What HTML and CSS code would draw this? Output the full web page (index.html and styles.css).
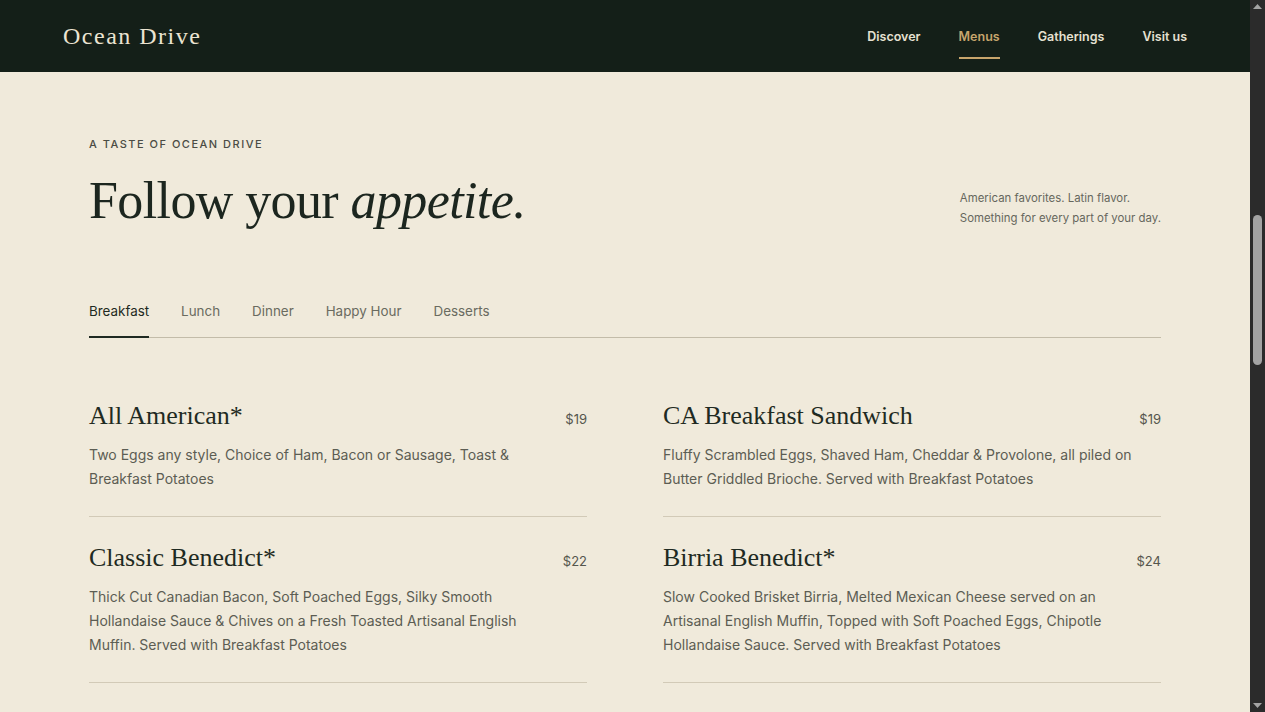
FILE: index.html
```html
<!DOCTYPE html>
<html lang="en">
<head>
  <meta charset="UTF-8" />
  <title>Menus - Ocean Drive</title>
  <link rel="stylesheet" href="styles.css">
</head>
<body>
  <header class="topbar">
    <a class="logo" href="#">Ocean Drive</a>
    <nav class="nav">
      <a href="#">Discover</a>
      <a href="#" class="active">Menus</a>
      <a href="#">Gatherings</a>
      <a href="#">Visit us</a>
    </nav>
  </header>

  <main class="page">
    <p class="eyebrow">A TASTE OF OCEAN DRIVE</p>
    <div class="intro">
      <h1>Follow your <em>appetite.</em></h1>
      <p class="intro-note">American favorites. Latin flavor.<br>Something for every part of your day.</p>
    </div>

    <div class="tabs">
      <a href="#" class="tab active">Breakfast</a>
      <a href="#" class="tab">Lunch</a>
      <a href="#" class="tab">Dinner</a>
      <a href="#" class="tab">Happy Hour</a>
      <a href="#" class="tab">Desserts</a>
    </div>

    <div class="menu-grid">
      <div class="dish">
        <div class="dish-head">
          <h3>All American*</h3>
          <span class="price">$19</span>
        </div>
        <p>Two Eggs any style, Choice of Ham, Bacon or Sausage, Toast &amp; Breakfast Potatoes</p>
      </div>
      <div class="dish">
        <div class="dish-head">
          <h3>CA Breakfast Sandwich</h3>
          <span class="price">$19</span>
        </div>
        <p>Fluffy Scrambled Eggs, Shaved Ham, Cheddar &amp; Provolone, all piled on Butter Griddled Brioche. Served with Breakfast Potatoes</p>
      </div>
      <div class="dish">
        <div class="dish-head">
          <h3>Classic Benedict*</h3>
          <span class="price">$22</span>
        </div>
        <p>Thick Cut Canadian Bacon, Soft Poached Eggs, Silky Smooth Hollandaise Sauce &amp; Chives on a Fresh Toasted Artisanal English Muffin. Served with Breakfast Potatoes</p>
      </div>
      <div class="dish">
        <div class="dish-head">
          <h3>Birria Benedict*</h3>
          <span class="price">$24</span>
        </div>
        <p>Slow Cooked Brisket Birria, Melted Mexican Cheese served on an Artisanal English Muffin, Topped with Soft Poached Eggs, Chipotle Hollandaise Sauce. Served with Breakfast Potatoes</p>
      </div>
      <div class="dish">
        <div class="dish-head">
          <h3>Buttermilk Pancakes</h3>
          <span class="price">$17</span>
        </div>
        <p>Three Fluffy Buttermilk Pancakes with Whipped Butter, Warm Maple Syrup &amp; Seasonal Berries</p>
      </div>
      <div class="dish">
        <div class="dish-head">
          <h3>Breakfast Burrito</h3>
          <span class="price">$18</span>
        </div>
        <p>Scrambled Eggs, Chorizo, Breakfast Potatoes, Pepper Jack &amp; Pico de Gallo in a Flour Tortilla with Salsa Roja</p>
      </div>
      <div class="dish">
        <div class="dish-head">
          <h3>Chilaquiles</h3>
          <span class="price">$19</span>
        </div>
        <p>Crispy Tortilla Chips tossed in Salsa Verde, Two Fried Eggs, Queso Fresco, Crema &amp; Pickled Onions</p>
      </div>
      <div class="dish">
        <div class="dish-head">
          <h3>Avocado Toast</h3>
          <span class="price">$16</span>
        </div>
        <p>Smashed Avocado on Toasted Sourdough, Cherry Tomatoes, Cotija, Chili Flakes &amp; a Poached Egg</p>
      </div>
    </div>

    <p class="footnote">*Consuming raw or undercooked meats, poultry, seafood, shellfish or eggs may increase your risk of foodborne illness.</p>
  </main>

  <footer class="footer">
    <span class="logo">Ocean Drive</span>
    <span>Open daily &middot; 7am &ndash; 10pm</span>
  </footer>

  <!-- window scrollbar as it shows in the shot -->
  <div class="scrollbar">
    <svg class="arrow" width="15" height="12" viewBox="0 0 15 12"><path d="M3 9 L7.5 4 L12 9 Z" fill="#a3a3a3"/></svg>
    <div class="thumb"></div>
    <svg class="arrow down" width="15" height="12" viewBox="0 0 15 12"><path d="M3 3 L7.5 8 L12 3 Z" fill="#a3a3a3"/></svg>
  </div>
</body>
</html>
```

FILE: styles.css
```css
* {
  box-sizing: border-box;
  margin: 0;
  padding: 0;
}

body {
  padding-right: 15px;
  background-color: #f0eadb;
  color: #1f2a22;
  font-family: Inter, "Noto Sans", sans-serif;
}

a {
  text-decoration: none;
  color: inherit;
}

/* header */
.topbar {
  position: sticky;
  top: 0;
  z-index: 10;
  height: 72px;
  padding: 0 63px;
  display: flex;
  align-items: center;
  justify-content: space-between;
  background-color: #141f18;
}

.logo {
  font-family: "Liberation Serif", serif;
  font-size: 24px;
  letter-spacing: 1.5px;
  color: #ebe4d2;
}

.nav {
  display: flex;
  gap: 38px;
  height: 100%;
}

.nav a {
  display: flex;
  align-items: center;
  position: relative;
  font-size: 12.5px;
  font-weight: 600;
  color: #e6e1d2;
}

.nav a.active {
  color: #c7a56c;
}

.nav a.active::after {
  content: "";
  position: absolute;
  left: 0;
  right: 0;
  top: 57px;
  height: 2px;
  background-color: #c7a56c;
}

/* intro */
.page {
  max-width: 1072px;
  margin: 0 auto;
  padding-top: 64px;
}

.eyebrow {
  font-size: 11px;
  line-height: 16px;
  letter-spacing: 1.5px;
  font-weight: 500;
  color: #4b4c44;
}

.intro {
  display: flex;
  justify-content: space-between;
  align-items: flex-end;
  margin-top: 23px;
}

.intro h1 {
  font-family: "Liberation Serif", serif;
  font-weight: normal;
  font-size: 52px;
  line-height: 52px;
  letter-spacing: -0.6px;
  color: #1c261f;
}

.intro-note {
  font-size: 11.4px;
  line-height: 20px;
  color: #66675d;
  margin-bottom: -1px;
}

/* tabs */
.tabs {
  display: flex;
  gap: 32px;
  margin-top: 74px;
  border-bottom: 1px solid #c3bca9;
}

.tab {
  font-size: 13.4px;
  line-height: 20px;
  padding-bottom: 15px;
  margin-bottom: -1px;
  color: #6a6b60;
  border-bottom: 2px solid transparent;
}

.tab.active {
  color: #1f2a22;
  border-bottom-color: #1f2a22;
}

/* dishes */
.menu-grid {
  display: grid;
  grid-template-columns: 1fr 1fr;
  column-gap: 76px;
  margin-top: 37px;
}

.dish {
  padding: 25px 0 25px;
  border-bottom: 1px solid #d2cab7;
}

.dish-head {
  display: flex;
  justify-content: space-between;
  align-items: baseline;
}

.dish h3 {
  font-family: "Liberation Serif", serif;
  font-weight: normal;
  font-size: 26px;
  line-height: 32px;
  color: #1f2a22;
}

.price {
  font-size: 13px;
  color: #55564d;
}

.dish p {
  max-width: 472px;
  margin-top: 11px;
  font-size: 14px;
  line-height: 24px;
  color: #5c5d53;
}

.footnote {
  margin: 48px 0 90px;
  font-size: 12px;
  color: #77786c;
}

.footer {
  display: flex;
  justify-content: space-between;
  align-items: center;
  padding: 40px 63px;
  background-color: #141f18;
  color: #cfc9b8;
  font-size: 13px;
}

/* fake window scrollbar */
.scrollbar {
  position: fixed;
  top: 0;
  right: 0;
  width: 15px;
  height: 100vh;
  z-index: 20;
  display: flex;
  flex-direction: column;
  align-items: center;
  background-color: #2b2b2b;
}

.arrow {
  display: block;
  flex-shrink: 0;
}

.thumb {
  width: 9px;
  height: 150px;
  margin-top: 203px;
  border-radius: 5px;
  background-color: #a3a3a3;
}

.arrow.down {
  margin-top: auto;
}
```
